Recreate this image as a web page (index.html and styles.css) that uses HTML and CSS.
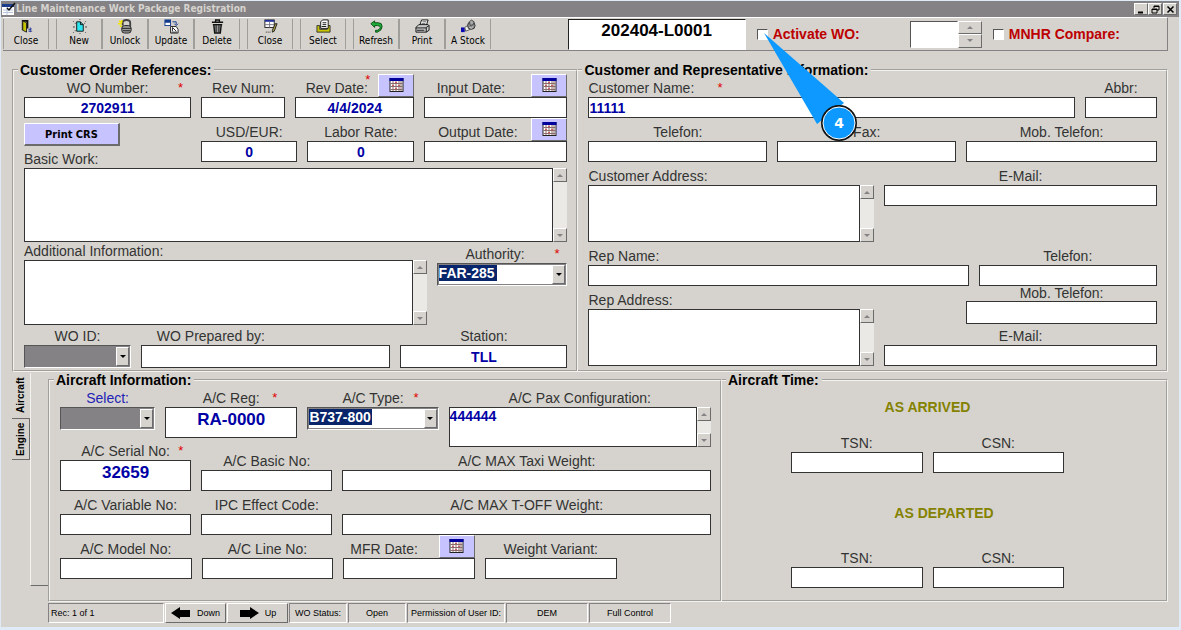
FILE: index.html
```html
<!DOCTYPE html>
<html lang="en">
<head>
    <meta charset="utf-8">
    <title>Line Maintenance Work Package Registration</title>
    <link rel="stylesheet" href="styles.css">
</head>
<body>
    <!-- shared icons -->
    <svg class="defs" aria-hidden="true">
        <symbol id="calendar" viewBox="0 0 14 14">
            <rect x="0" y="0" width="14" height="14" fill="#222"/>
            <rect x="0" y="0" width="14" height="3" fill="#00009c"/>
            <rect x="1" y="3" width="12" height="10" fill="#fff"/>
            <path d="M1 5.5h12M1 8.5h12M1 11.5h12M3.5 3v10M6.5 3v10M9.5 3v10M11.5 3v10" stroke="#8a6a6a" stroke-width="1"/>
            <path d="M6 4h1v1h-1zM9 7h1v1h-1zM3 7h1v1h-1zM6 10h1v1h-1z" fill="#d00"/>
        </symbol>
    </svg>

    <div class="window">
        <header class="titlebar">
            <svg class="app-icon" viewBox="0 0 14 14">
                <rect x="0" y="3" width="12" height="10" fill="#fff"/>
                <rect x="0" y="2" width="12" height="3" fill="#1a3c8c"/>
                <path d="M1 8h10M1 10.500h10M5 5v8" stroke="#b8c4dc"/>
                <path d="M5 6l2 2 6-7" stroke="#111" stroke-width="1.500" fill="none"/>
            </svg>
            <h1>Line Maintenance Work Package Registration</h1>
            <button type="button" aria-label="Minimize"><svg viewBox="0 0 9 9"><path d="M1 7.500h5" stroke="#000" stroke-width="2"/></svg></button>
            <button type="button" aria-label="Restore"><svg viewBox="0 0 9 9"><path d="M3 3V1h5v4H6M3 1.500h5M1 4h5v4H1zM1 4.500h5" stroke="#000" fill="none"/></svg></button>
            <button type="button" aria-label="Close window"><svg viewBox="0 0 9 9"><path d="M1.500 1.500l6 6M7.500 1.500l-6 6" stroke="#000" stroke-width="1.500"/></svg></button>
        </header>

        <div class="toolbar">
            <div class="tools">
                <div class="tool-group">
                    <button type="button">
                        <svg viewBox="0 0 16 16"><path d="M3 1h7v9h-2V3H5v9H3z" fill="#111"/><path d="M4 2l4 2v10l-4-2z" fill="#c6c300" stroke="#222"/><path d="M10 11h3v-1M12 9v5M10 13h4" stroke="#2a3c9c" fill="none"/></svg>
                        Close
                    </button>
                </div>
                <div class="tool-group">
                    <button type="button">
                        <svg viewBox="0 0 16 16"><path d="M5 3h4l3 3v7H5z" fill="#2ee6f0" stroke="#111"/><path d="M9 3v3h3" stroke="#111" fill="none"/><path d="M1 2h1v1h-1zM3 4h1v1h-1zM14 2h1v1h-1zM13 4h1v1h-1zM1 8h2v1h-2zM14 8h2v1h-2zM1 14h1v1h-1zM3 12h1v1h-1zM14 14h1v1h-1zM8 0h1v1h-1zM8 15h1v1h-1z" fill="#444"/></svg>
                        New
                    </button>
                    <button type="button">
                        <svg viewBox="0 0 16 16"><path d="M5 7V4q0-3 4-3t4 3v4" stroke="#444" stroke-width="2" fill="none"/><rect x="4" y="7" width="10" height="8" rx="3" fill="#999" stroke="#222"/><path d="M4 10h10M5 12.500h8" stroke="#222"/><path d="M1 2l3 2M0 5h4M2 8l2-1M4 1v3" stroke="#f5e400" stroke-width="1.500"/></svg>
                        Unlock
                    </button>
                    <button type="button">
                        <svg viewBox="0 0 16 16"><rect x="1" y="1" width="6" height="6" fill="#fff" stroke="#123a8c"/><path d="M1 1h6v3H1z" fill="#123a8c"/><path d="M9 3h4v3M11 5l2 2 2-2" stroke="#123a8c" fill="none"/><path d="M7 8h6l2 3v4H7z" fill="#fff" stroke="#222"/><path d="M9 13V9l4 4M8 14h6" stroke="#222" fill="none"/></svg>
                        Update
                    </button>
                    <button type="button">
                        <svg viewBox="0 0 16 16"><path d="M6 3V1h4v2M2 3.500h12" stroke="#111" stroke-width="1.500" fill="none"/><path d="M3 6h10M4 6l1 9h6l1-9" stroke="#111" stroke-width="1.500" fill="#999"/><path d="M6.500 6v8M9.500 6v8" stroke="#111"/></svg>
                        Delete
                    </button>
                </div>
                <div class="tool-group">
                    <button type="button">
                        <svg viewBox="0 0 16 16"><rect x="2" y="1" width="10" height="8" fill="#fff" stroke="#222"/><path d="M2 1h10v2H2z" fill="#22309c"/><path d="M2 6h10M7 3v6" stroke="#778"/><path d="M15 5l-3 8-2 1v-2l3-7z" fill="#a8a040" stroke="#222"/><path d="M3 14h1M5 14h1M7 14h1" stroke="#222"/></svg>
                        Close
                    </button>
                </div>
                <div class="tool-group">
                    <button type="button">
                        <svg viewBox="0 0 16 16"><path d="M1 7h3v4h8V7h3v7H1z" fill="#c6c300" stroke="#333"/><path d="M5 10V3l2-2h6v9z" fill="#fff" stroke="#111"/><path d="M7 4h4M7 6h4M6 8h5" stroke="#111"/></svg>
                        Select
                    </button>
                </div>
                <div class="tool-group">
                    <button type="button">
                        <svg viewBox="0 0 16 16"><path d="M2 5l4-3v2h4q4 0 4 4t-5 6H7v-2h2q3-1 3-3t-3-2H6v2z" fill="#1fae3a" stroke="#084d14"/></svg>
                        Refresh
                    </button>
                    <button type="button">
                        <svg viewBox="0 0 16 16"><path d="M5 7l2-6h7l-2 6z" fill="#fff" stroke="#111"/><path d="M8 3h4M7 5h4" stroke="#555"/><path d="M1 9l3-3h10l1 1v5l-3 2H1z" fill="#ccc" stroke="#111"/><path d="M1 9.500h11M2 12h8M12 9l3-2M12 9v5" stroke="#111" fill="none"/></svg>
                        Print
                    </button>
                    <button type="button">
                        <svg viewBox="0 0 16 16"><rect x="0" y="9" width="4" height="5" fill="#0a0ab0"/><path d="M4 9l3-2 3 4-5 2z" fill="#eee" stroke="#555"/><circle cx="11" cy="7" r="4" fill="#8a8a8a" stroke="#333"/><path d="M9 3l2-2 3 2-1 3-3 1z" fill="#aaa" stroke="#444"/><path d="M9 9q2 2 4-1" stroke="#ddd" fill="none"/></svg>
                        A Stock
                    </button>
                </div>
            </div>
            <input class="wo-code value" aria-label="Work package" value="202404-L0001">
            <div class="check activate">
                <input type="checkbox" id="activate">
                <label for="activate">Activate WO:</label>
                <svg class="callout" viewBox="0 0 100 112">
                    <path d="M7 2L87 72 60 93z" fill="#0d99ff"/>
                    <circle cx="82" cy="92" r="17" fill="#0d99ff" stroke="#111" stroke-width="2"/>
                    <circle cx="82" cy="92" r="16" fill="none" stroke="#fff"/>
                    <text x="82" y="97" text-anchor="middle">4</text>
                </svg>
            </div>
            <div class="spinner">
                <input aria-label="Count">
                <div class="spin-buttons">
                    <button type="button" aria-label="Increase"><i class="up"></i></button>
                    <button type="button" aria-label="Decrease"><i class="down"></i></button>
                </div>
            </div>
            <div class="check">
                <input type="checkbox" id="mnhr">
                <label for="mnhr">MNHR Compare:</label>
            </div>
        </div>

        <main>
            <div class="orders">
                <fieldset class="order-refs">
                    <legend>Customer Order References:</legend>
                    <div class="row">
                        <div class="field w167">
                            <div class="caption"><label for="woNumber">WO Number:</label><b class="req">*</b></div>
                            <input class="value" id="woNumber" value="2702911">
                        </div>
                        <div class="field w84">
                            <div class="caption"><label for="revNum">Rev Num:</label></div>
                            <input id="revNum">
                        </div>
                        <div class="field w119">
                            <div class="caption"><label for="revDate">Rev Date:</label><b class="req req-date">*</b>
                                <button type="button" class="cal" aria-label="Pick rev date"><svg><use href="#calendar"/></svg></button></div>
                            <input class="value" id="revDate" value="4/4/2024">
                        </div>
                        <div class="field w143">
                            <div class="caption inset"><label for="inputDate">Input Date:</label>
                                <button type="button" class="cal" aria-label="Pick input date"><svg><use href="#calendar"/></svg></button></div>
                            <input id="inputDate">
                        </div>
                    </div>
                    <div class="row spaced">
                        <div class="field w167 print-cell">
                            <button type="button" class="print-crs">Print CRS</button>
                            <div class="caption left"><label for="basicWork">Basic Work:</label></div>
                        </div>
                        <div class="field w96">
                            <div class="caption"><label for="usdEur">USD/EUR:</label></div>
                            <input class="value" id="usdEur" value="0">
                        </div>
                        <div class="field w107">
                            <div class="caption"><label for="laborRate">Labor Rate:</label></div>
                            <input class="value" id="laborRate" value="0">
                        </div>
                        <div class="field w143">
                            <div class="caption"><label for="outputDate">Output Date:</label>
                                <button type="button" class="cal" aria-label="Pick output date"><svg><use href="#calendar"/></svg></button></div>
                            <input id="outputDate">
                        </div>
                    </div>
                    <div class="memo memo-basic">
                        <textarea id="basicWork"></textarea>
                        <div class="scroll"><span><i class="up"></i></span><span><i class="down"></i></span></div>
                    </div>
                    <div class="row">
                        <div class="field w403">
                            <div class="caption left"><label for="addInfo">Additional Information:</label></div>
                            <div class="memo memo-info">
                                <textarea id="addInfo"></textarea>
                                <div class="scroll"><span><i class="up"></i></span><span><i class="down"></i></span></div>
                            </div>
                        </div>
                        <div class="field w131 authority">
                            <div class="caption inset"><label for="authority">Authority:</label><b class="req">*</b></div>
                            <div class="combo">
                                <select id="authority" class="marked"><option>FAR-285</option></select>
                                <span class="arrow"><i class="down"></i></span>
                            </div>
                        </div>
                    </div>
                    <div class="row tall">
                        <div class="field w107">
                            <div class="caption"><label for="woId">WO ID:</label></div>
                            <div class="combo">
                                <select id="woId" class="blank"><option></option></select>
                                <span class="arrow"><i class="down"></i></span>
                            </div>
                        </div>
                        <div class="field w249">
                            <div class="caption prepared"><label for="preparedBy">WO Prepared by:</label></div>
                            <input id="preparedBy">
                        </div>
                        <div class="field w167">
                            <div class="caption"><label for="station">Station:</label></div>
                            <input class="value" id="station" value="TLL">
                        </div>
                    </div>
                </fieldset>

                <fieldset class="customer">
                    <legend>Customer and Representative Information:</legend>
                    <div class="row">
                        <div class="field w485">
                            <div class="caption left"><label for="custName">Customer Name:</label><b class="req req-name">*</b></div>
                            <input class="value left" id="custName" value="11111">
                        </div>
                        <div class="field w72">
                            <div class="caption"><label for="abbr">Abbr:</label></div>
                            <input id="abbr">
                        </div>
                    </div>
                    <div class="row spaced">
                        <div class="field w178">
                            <div class="caption"><label for="telefon">Telefon:</label></div>
                            <input id="telefon">
                        </div>
                        <div class="field w178">
                            <div class="caption"><label for="fax">Fax:</label></div>
                            <input id="fax">
                        </div>
                        <div class="field w190">
                            <div class="caption"><label for="mobile">Mob. Telefon:</label></div>
                            <input id="mobile">
                        </div>
                    </div>
                    <div class="row spaced">
                        <div class="field w285">
                            <div class="caption left"><label for="custAddress">Customer Address:</label></div>
                            <div class="memo memo-address">
                                <textarea id="custAddress"></textarea>
                                <div class="scroll"><span><i class="up"></i></span><span><i class="down"></i></span></div>
                            </div>
                        </div>
                        <div class="field w272">
                            <div class="caption"><label for="email">E-Mail:</label></div>
                            <input id="email">
                        </div>
                    </div>
                    <div class="row spaced">
                        <div class="field w379">
                            <div class="caption left"><label for="repName">Rep Name:</label></div>
                            <input id="repName">
                        </div>
                        <div class="field w178">
                            <div class="caption"><label for="repTelefon">Telefon:</label></div>
                            <input id="repTelefon">
                        </div>
                    </div>
                    <div class="row">
                        <div class="field w285 rep-address">
                            <div class="caption left"><label for="repAddress">Rep Address:</label></div>
                            <div class="memo memo-address">
                                <textarea id="repAddress"></textarea>
                                <div class="scroll"><span><i class="up"></i></span><span><i class="down"></i></span></div>
                            </div>
                        </div>
                        <div class="w272 rep-contact">
                            <div class="field rep-mobile">
                                <div class="caption tight"><label for="repMobile">Mob. Telefon:</label></div>
                                <input id="repMobile">
                            </div>
                            <div class="field">
                                <div class="caption"><label for="repEmail">E-Mail:</label></div>
                                <input id="repEmail">
                            </div>
                        </div>
                    </div>
                </fieldset>
            </div>

            <div class="details">
                <div class="tabs" role="tablist">
                    <button type="button" role="tab" aria-selected="true" class="tab active">Aircraft</button>
                    <button type="button" role="tab" aria-selected="false" class="tab">Engine</button>
                </div>
                <div class="sheet-edge"></div>

                <fieldset class="aircraft">
                    <legend>Aircraft Information:</legend>
                    <div class="row first">
                        <div class="field w95">
                            <div class="caption link"><label for="acSelect">Select:</label></div>
                            <div class="combo">
                                <select id="acSelect" class="blank"><option></option></select>
                                <span class="arrow"><i class="down"></i></span>
                            </div>
                        </div>
                        <div class="field w132">
                            <div class="caption"><label for="acReg">A/C Reg:</label><b class="req req-in">*</b></div>
                            <input class="value big" id="acReg" value="RA-0000">
                        </div>
                        <div class="field w131">
                            <div class="caption"><label for="acType">A/C Type:</label><b class="req req-in">*</b></div>
                            <div class="combo">
                                <select id="acType" class="marked wide"><option>B737-800</option></select>
                                <span class="arrow"><i class="down"></i></span>
                            </div>
                        </div>
                        <div class="field w262">
                            <div class="caption"><label for="pax">A/C Pax Configuration:</label></div>
                            <div class="memo memo-pax">
                                <textarea class="value left" id="pax">444444</textarea>
                                <div class="scroll"><span><i class="up"></i></span><span><i class="down"></i></span></div>
                            </div>
                        </div>
                    </div>
                    <div class="row bottom">
                        <div class="field w131">
                            <div class="caption"><label for="serial">A/C Serial No:</label><b class="req">*</b></div>
                            <input class="value big" id="serial" value="32659">
                        </div>
                        <div class="field w131">
                            <div class="caption"><label for="basicNo">A/C Basic No:</label></div>
                            <input id="basicNo">
                        </div>
                        <div class="field w368">
                            <div class="caption"><label for="maxTaxi">A/C MAX Taxi Weight:</label></div>
                            <input id="maxTaxi">
                        </div>
                    </div>
                    <div class="row spaced">
                        <div class="field w131">
                            <div class="caption"><label for="variable">A/C Variable No:</label></div>
                            <input id="variable">
                        </div>
                        <div class="field w131">
                            <div class="caption"><label for="ipc">IPC Effect Code:</label></div>
                            <input id="ipc">
                        </div>
                        <div class="field w368">
                            <div class="caption"><label for="maxToff">A/C MAX T-OFF Weight:</label></div>
                            <input id="maxToff">
                        </div>
                    </div>
                    <div class="row spaced">
                        <div class="field w131">
                            <div class="caption"><label for="model">A/C Model No:</label></div>
                            <input id="model">
                        </div>
                        <div class="field w131">
                            <div class="caption"><label for="line">A/C Line No:</label></div>
                            <input id="line">
                        </div>
                        <div class="field w131">
                            <div class="caption inset"><label for="mfr">MFR Date:</label>
                                <button type="button" class="cal" aria-label="Pick MFR date"><svg><use href="#calendar"/></svg></button></div>
                            <input id="mfr">
                        </div>
                        <div class="field w131">
                            <div class="caption"><label for="variant">Weight Variant:</label></div>
                            <input id="variant">
                        </div>
                        <div class="w84"></div>
                    </div>
                </fieldset>

                <fieldset class="time">
                    <legend>Aircraft Time:</legend>
                    <h2>AS ARRIVED</h2>
                    <div class="row">
                        <div class="field w131">
                            <div class="caption"><label for="arrTsn">TSN:</label></div>
                            <input id="arrTsn">
                        </div>
                        <div class="field w131">
                            <div class="caption"><label for="arrCsn">CSN:</label></div>
                            <input id="arrCsn">
                        </div>
                    </div>
                    <h2 class="departed">AS DEPARTED</h2>
                    <div class="row">
                        <div class="field w131">
                            <div class="caption"><label for="depTsn">TSN:</label></div>
                            <input id="depTsn">
                        </div>
                        <div class="field w131">
                            <div class="caption"><label for="depCsn">CSN:</label></div>
                            <input id="depCsn">
                        </div>
                    </div>
                </fieldset>
            </div>
        </main>

        <footer class="statusbar">
            <div class="cell rec">Rec: 1 of 1</div>
            <button type="button"><svg viewBox="0 0 20 12"><path d="M0 6l9-6v3h10v7H9v2z"/></svg>Down</button>
            <button type="button"><svg viewBox="0 0 20 12"><path d="M20 6l-9-6v3H1v7h10v2z"/></svg>Up</button>
            <div class="cell status">WO Status:</div>
            <div class="cell status">Open</div>
            <div class="cell permission">Permission of User ID:</div>
            <div class="cell user">DEM</div>
            <div class="cell user">Full Control</div>
        </footer>
    </div>
</body>
</html>
```

FILE: styles.css
```css
* {
  box-sizing: border-box;
}

body {
  margin: 0;
  padding: 1px 2px 0 1px;
  min-height: 100vh;
  background-color: #dfebf6;
  font-family: "Liberation Sans", Arial, sans-serif;
  font-size: 14px;
  color: #333333;
}

button, input, select, textarea {
  font: inherit;
  margin: 0;
  padding: 0;
  border-radius: 0;
}

button {
  background-color: #d6d3ce;
  color: #000000;
  border: 1px solid;
  border-color: #ffffff #6b6b6b #6b6b6b #ffffff;
}

.defs {
  display: none;
}

.window {
  background-color: #d6d3ce;
  padding-bottom: 4px;
}

/* title bar */

.titlebar {
  display: flex;
  align-items: center;
  height: 16px;
  padding: 0 2px 0 1px;
  background-color: #848284;
}

.app-icon {
  width: 14px;
  height: 14px;
}

.titlebar h1 {
  flex: 1;
  margin: 0;
  font-family: "DejaVu Sans Condensed", "DejaVu Sans", sans-serif;
  font-size: 10px;
  line-height: 14px;
  color: #d6d3ce;
}

.titlebar button {
  display: flex;
  align-items: center;
  justify-content: center;
  width: 14px;
  height: 12px;
}

.titlebar button:last-child {
  margin-left: 1px;
}

.titlebar button svg {
  width: 9px;
  height: 9px;
}

/* toolbar */

.toolbar {
  display: flex;
  align-items: center;
  height: 34px;
  margin: 0 11px 0 2px;
  padding-right: 47px;
  border: 1px solid #848284;
  border-top-color: #ffffff;
  border-left: 0;
}

.tools {
  flex: 1;
  display: flex;
  gap: 7px;
}

.tool-group {
  display: flex;
}

.tool-group button {
  display: flex;
  flex-direction: column;
  align-items: center;
  width: 46px;
  height: 30px;
  border-width: 0 1px;
  border-color: #ffffff #a09e9a;
  font-family: "DejaVu Sans Condensed", "DejaVu Sans", sans-serif;
  font-size: 10px;
  line-height: 14px;
  white-space: nowrap;
}

.tool-group svg {
  width: 15px;
  height: 15px;
}

.value {
  color: #0000a5;
  font-weight: bold;
}

.wo-code {
  width: 178px;
  height: 31px;
  padding-bottom: 6px;
  border: 1px solid #222222;
  border-right-color: #ffffff;
  border-bottom-color: #ffffff;
  color: #000000;
  font-size: 17px;
  text-align: center;
}

.check {
  display: flex;
  align-items: center;
  gap: 5px;
  font-weight: bold;
  color: #bd0000;
}

.check input {
  appearance: none;
  width: 11px;
  height: 11px;
  background-color: #ffffff;
  border: 1px solid #ffffff;
  border-top-color: #555555;
  border-left-color: #555555;
}

.activate {
  position: relative;
  margin: 0 50px 0 11px;
}

/* numbered marker pointing at the checkbox */
.callout {
  position: absolute;
  left: 0;
  top: 5px;
  width: 100px;
  height: 112px;
  z-index: 2;
  pointer-events: none;
}

.callout text {
  font-family: "DejaVu Sans", sans-serif;
  font-size: 14px;
  font-weight: bold;
  fill: #ffffff;
}

.spinner {
  display: flex;
  height: 27px;
  margin-right: 11px;
}

.spinner input {
  width: 48px;
  border: 1px solid #ffffff;
  border-top-color: #555555;
  border-left-color: #555555;
}

.spin-buttons {
  display: flex;
  flex-direction: column;
  width: 24px;
}

.spin-buttons button {
  flex: 1;
  display: flex;
  align-items: center;
  justify-content: center;
}

.up, .down {
  border: 3px solid transparent;
}

.up {
  border-top-width: 0;
  border-bottom-color: #848284;
}

.down {
  border-bottom-width: 0;
  border-top-color: #848284;
}

/* groups */

main {
  margin: 12px 11px 0 11px;
}

.orders, .details {
  display: grid;
}

.orders {
  grid-template-columns: 566fr 589fr;
}

.details {
  grid-template-columns: 18px 18px 674fr 446fr;
  margin-top: 1px;
}

fieldset {
  min-width: 0;
  margin: 0;
  padding: 2px 9px 2px 10px;
  border: 2px groove #f4f2ee;
}

legend {
  height: 14px;
  margin-left: -6px;
  padding: 0 3px 0 2px;
  line-height: 14px;
  font-weight: bold;
  color: #000000;
}

.customer, .time {
  border-left: 0;
}

.row {
  display: flex;
  gap: 10px;
}

.spaced {
  margin-top: 5px;
}

.field {
  display: flex;
  flex-direction: column;
  min-width: 0;
}

.caption {
  position: relative;
  display: flex;
  align-items: flex-end;
  height: 18px;
  line-height: 18px;
  white-space: nowrap;
}

.caption label {
  flex: 1;
  text-align: center;
}

.caption.left label {
  text-align: left;
}

.caption.inset label {
  padding-right: 14px;
}

.caption.prepared {
  width: 56%;
}

.caption.tight {
  height: 15px;
  line-height: 15px;
}

.caption.link {
  color: #2222b5;
}

.req {
  position: absolute;
  right: 8px;
  top: 0;
  font-size: 13px;
  font-weight: normal;
  color: #e00000;
}

.req-in {
  right: 20px;
}

.req-date {
  right: 44px;
  top: -8px;
}

.req-name {
  right: auto;
  left: 129px;
}

.field input {
  width: 100%;
  height: 21px;
  background-color: #ffffff;
  border: 1px solid #333333;
}

.field input.value {
  text-align: center;
}

.field input.value.left {
  text-align: left;
}

.field input.big {
  height: 31px;
  padding-bottom: 6px;
  font-size: 17px;
}

.tall {
  margin-top: 2px;
}

.field.w249 input, .tall input {
  height: 23px;
}

/* relative widths of the fields in a row */
.w72 { flex: 72 1 0; }
.w84 { flex: 84 1 0; }
.w95 { flex: 95 1 0; }
.w96 { flex: 96 1 0; }
.w107 { flex: 107 1 0; }
.w119 { flex: 119 1 0; }
.w131 { flex: 131 1 0; }
.w132 { flex: 132 1 0; }
.w143 { flex: 143 1 0; }
.w167 { flex: 167 1 0; }
.w178 { flex: 178 1 0; }
.w190 { flex: 190 1 0; }
.w249 { flex: 249 1 0; }
.w262 { flex: 262 1 0; }
.w272 { flex: 272 1 0; }
.w285 { flex: 285 1 0; }
.w368 { flex: 368 1 0; }
.w379 { flex: 379 1 0; }
.w403 { flex: 403 1 0; }
.w485 { flex: 485 1 0; }

.cal {
  display: flex;
  justify-content: center;
  width: 36px;
  height: 23px;
  padding-top: 3px;
  background-color: #c6c3ff;
}

.cal svg {
  width: 15px;
  height: 14px;
}

.print-cell {
  justify-content: space-between;
  height: 45px;
}

.print-crs {
  width: 96px;
  height: 23px;
  background-color: #c6c3ff;
  border-width: 1px 2px 2px 1px;
  font-family: "DejaVu Sans Condensed", "DejaVu Sans", sans-serif;
  font-size: 11px;
  font-weight: bold;
}

/* text areas with their scroll strip */

.memo {
  display: flex;
}

.memo textarea {
  flex: 1;
  min-width: 0;
  background-color: #ffffff;
  border: 1px solid #333333;
  overflow: hidden;
  resize: none;
}

.memo-basic { height: 74px; }
.memo-info { height: 65px; }
.memo-address { height: 57px; }
.memo-pax { height: 40px; }

.scroll {
  display: flex;
  flex-direction: column;
  justify-content: space-between;
  width: 14px;
  background-color: #ebe9e6;
}

.scroll span {
  display: flex;
  align-items: center;
  justify-content: center;
  height: 14px;
  background-color: #d6d3ce;
  border: 1px solid;
  border-color: #ffffff #6b6b6b #6b6b6b #ffffff;
}

/* drop-downs */

.combo {
  position: relative;
  display: flex;
  height: 23px;
  border: 1px solid #ffffff;
  border-top-color: #555555;
  border-left-color: #555555;
}

.combo select {
  appearance: none;
  flex: 1;
  min-width: 0;
  border: 1px solid #848284;
  background-color: #ffffff;
}

.combo select.blank {
  background-color: #848284;
}

.combo select.marked {
  background-image: linear-gradient(#08246b, #08246b);
  background-size: 58px 16px;
  background-repeat: no-repeat;
  color: #ffffff;
  font-weight: bold;
  line-height: 16px;
  padding-bottom: 3px;
}

.combo select.wide {
  background-size: 63px 16px;
}

.arrow {
  position: absolute;
  top: 1px;
  right: 1px;
  bottom: 1px;
  display: flex;
  align-items: center;
  justify-content: center;
  width: 13px;
  background-color: #d6d3ce;
  border: 1px solid;
  border-color: #ffffff #6b6b6b #6b6b6b #ffffff;
  pointer-events: none;
}

.arrow .down {
  border-top-color: #000000;
}

.authority {
  padding-top: 3px;
}

.rep-address {
  padding-top: 5px;
}

.rep-contact {
  display: flex;
  flex-direction: column;
  gap: 3px;
}

.rep-mobile {
  width: 70%;
  align-self: flex-end;
}

.rep-mobile input {
  height: 23px;
}

/* lower part */

.tab {
  display: block;
  width: 18px;
  height: 41px;
  border-width: 1px 0 0 1px;
  border-color: #6b6b6b;
  font-size: 10px;
  font-weight: bold;
  line-height: 16px;
  writing-mode: vertical-rl;
  transform: rotate(180deg);
}

.tab.active {
  height: 46px;
  border-left: 0;
}

.sheet-edge {
  margin-bottom: 16px;
  border-left: 1px solid #f4f2ee;
  border-bottom: 1px solid #6b6b6b;
}

.aircraft {
  padding-bottom: 21px;
}

.first {
  align-items: flex-start;
  margin-bottom: -5px;
}

.bottom {
  align-items: flex-end;
}

.time {
  padding: 10px 102px 0 69px;
}

.time legend {
  margin-left: -65px;
}

.time h2 {
  margin: 0 0 17px 0;
  font-size: 14px;
  line-height: 20px;
  text-align: center;
  color: #848200;
}

.time h2.departed {
  margin: 30px -33px 26px 0;
}

/* status bar */

.statusbar {
  display: flex;
  gap: 1px;
  margin-left: 47px;
  padding-top: 1px;
  font-size: 9px;
  color: #000000;
}

.cell {
  height: 20px;
  line-height: 18px;
  border: 1px solid;
  border-color: #848284 #ffffff #ffffff #848284;
  text-align: center;
  white-space: nowrap;
}

.statusbar button {
  display: flex;
  align-items: center;
  justify-content: center;
  gap: 6px;
  width: 61px;
  height: 20px;
}

.statusbar button svg {
  width: 20px;
  height: 12px;
}

.rec {
  width: 116px;
  padding-left: 2px;
  text-align: left;
}

.status {
  width: 58px;
}

.permission {
  width: 98px;
}

.user {
  width: 82px;
}
```
